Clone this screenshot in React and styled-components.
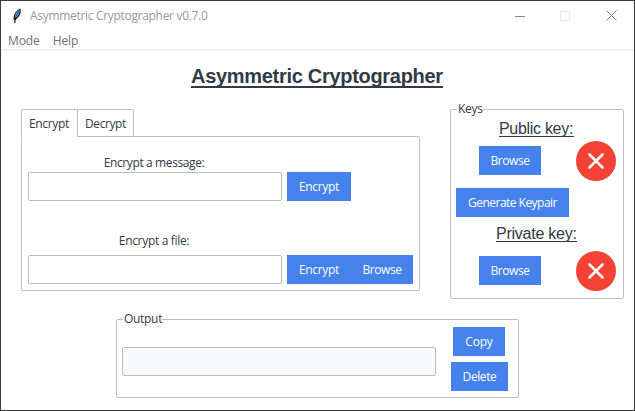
import React from "react";
import styled, { createGlobalStyle } from "styled-components";

const Global = createGlobalStyle`
  * { box-sizing: border-box; }
  body { margin: 0; background: #fff; }
  button, input { font: inherit; }
`;

const Window = styled.div`
  width: 635px;
  height: 411px;
  border: 1px solid #3b3b3d;
  background: #fff;
  color: #313a46;
  font: 12px/16px "Open Sans", "Noto Sans", sans-serif;
  overflow: hidden;
`;

const TitleBar = styled.header`
  display: flex;
  align-items: center;
  height: 29px;
  padding-left: 10px;
  color: #999;
`;

const WindowTitle = styled.span`
  flex: 1;
  margin-left: 7px;
  letter-spacing: -0.31px;
  white-space: nowrap;
`;

const WindowControls = styled.div`
  display: flex;
  align-items: center;
  gap: 35px;
  padding-right: 17px;

  svg:last-child {
    margin-left: 1px;
  }
`;

const MenuBar = styled.nav`
  display: flex;
  gap: 13px;
  height: 21px;
  padding: 3px 7px 0;
  border-bottom: 2px solid #f0f0f0;
  color: #6d6d6d;
`;

const Text = styled.span`
  letter-spacing: ${(p) => p.$track || 0}px;
  white-space: nowrap;
`;

const Content = styled.main`
  display: flex;
  flex-direction: column;
`;

const Heading = styled.h1`
  width: 252px;
  height: 23px;
  margin: 14px 0 0 190px;
  border-bottom: 2px solid #313a46;
  font: bold 20px/23px "Liberation Sans", Arial, sans-serif;
  letter-spacing: -0.3px;
  white-space: nowrap;
`;

const Columns = styled.div`
  display: flex;
  align-items: flex-start;
  gap: 30px;
  margin: 21px 0 0 20px;
`;

const Notebook = styled.section`
  width: 399px;
`;

const TabList = styled.div`
  display: flex;
  height: 28px;
`;

const Tab = styled.button`
  width: 57px;
  height: 28px;
  margin: 0 -1px 0 0;
  padding: 0 0 0 7px;
  border: 1px solid #bdbdbd;
  border-bottom-color: ${(p) => (p.$active ? "#fff" : "#bdbdbd")};
  border-radius: 2px 2px 0 0;
  background: #fff;
  color: inherit;
  text-align: left;
  line-height: 28px;
`;

const TabPane = styled.div`
  height: 155px;
  margin-top: -1px;
  padding: 18px 6px 0;
  border: 1px solid #bdbdbd;
  border-radius: 0 2px 2px 2px;
  clip-path: polygon(0 1px, 56px 1px, 56px 0, 100% 0, 100% 100%, 0 100%);
`;

const Field = styled.div`
  display: grid;
  grid-template-columns: 254px auto;
  grid-template-rows: ${(p) => p.$labelHeight}px 29px;
  column-gap: 5px;
`;

const FieldLabel = styled.label`
  grid-column: 1;
  justify-self: center;
  margin-right: 2px;
  padding-top: ${(p) => p.$top || 0}px;
  letter-spacing: ${(p) => p.$track || 0}px;
  white-space: nowrap;
`;

const Entry = styled.input`
  grid-column: 1;
  width: 100%;
  height: 29px;
  margin: 0;
  padding: 0 6px;
  border: 1px solid #bdbdbd;
  border-radius: 2px;
  outline: 0;
  background: ${(p) => (p.readOnly ? "#f8f9fb" : "#fff")};
`;

const ButtonRow = styled.div`
  display: flex;
`;

const Button = styled.button`
  width: ${(p) => p.$width}px;
  height: 29px;
  padding: 0;
  border: 0;
  background: #4582ec;
  color: #fff;
  line-height: 29px;
  letter-spacing: ${(p) => p.$track || 0}px;
  white-space: nowrap;
`;

const Group = styled.section`
  width: ${(p) => p.$width}px;
  height: ${(p) => p.$height}px;
  border: 1px solid #bdbdbd;
  border-radius: 2px;
`;

const GroupTitle = styled.h2`
  width: fit-content;
  height: 16px;
  margin: -9px 0 0 6px;
  padding: 0 0 0 1px;
  background: #fff;
  font: inherit;
  letter-spacing: ${(p) => p.$track || 0}px;
`;

const KeyTitle = styled.h3`
  width: ${(p) => p.$width}px;
  height: 18px;
  margin: ${(p) => p.$top}px 0 0 ${(p) => p.$left}px;
  border-bottom: 1px solid #313a46;
  font: 16px/20px "Liberation Sans", Arial, sans-serif;
  letter-spacing: ${(p) => p.$track || 0}px;
  white-space: nowrap;
`;

const KeyRow = styled.div`
  display: flex;
  justify-content: space-between;
  height: 40px;
  margin: ${(p) => p.$top}px 7px 0 28px;

  ${Button} {
    margin: 5px 0 0;
  }
`;

const GenerateRow = styled.div`
  display: flex;
  margin: 7px 0 0 5px;
`;

const OutputArea = styled.div`
  display: flex;
  align-items: flex-start;
  padding-left: 5px;
`;

const OutputEntry = styled.div`
  width: 314px;
  margin-top: 20px;
`;

const OutputActions = styled.div`
  display: flex;
  flex-direction: column;
  align-items: center;
  gap: 6px;
  width: 57px;
  margin-left: 15px;

  ${Button}:first-child {
    margin-right: 1px;
  }
`;

const OutputWrap = styled.div`
  margin: 20px 0 0 115px;
`;

function Feather() {
  return (
    <svg width="12" height="16" viewBox="0 0 12 16">
      <path d="M2.8 12C1.6 8.5 4.2 2.6 9.2.5c1.4 2.6.4 7.6-4.2 11z" fill="#18222e" />
      <path d="M3.7 10C3.7 7 5.6 3.4 8.5 1.8 9 4.6 7.4 8.6 4.3 10.6z" fill="#5a98dc" />
      <path d="M7.8 3.2 4.6 9.4" stroke="#1d3c60" strokeWidth=".7" />
      <path d="M4.6 9.5 3.6 15.2" stroke="#101010" strokeWidth="1.2" />
    </svg>
  );
}

function Missing() {
  return (
    <svg width="40" height="40" viewBox="0 0 40 40">
      <circle cx="20" cy="20" r="20" fill="#f44336" />
      <path d="M13.5 13.5 26.5 26.5M26.5 13.5 13.5 26.5" stroke="#fff" strokeWidth="2.6" strokeLinecap="round" />
    </svg>
  );
}

export default function App() {
  return (
    <>
      <Global />
      <Window>
        <TitleBar>
          <Feather />
          <WindowTitle>Asymmetric Cryptographer v0.7.0</WindowTitle>
          <WindowControls>
            <svg width="10" height="10"><path d="M0 5.5h10" stroke="#888" /></svg>
            <svg width="10" height="10"><path d="M.5.5h9v9h-9z" fill="none" stroke="#e8e8e8" /></svg>
            <svg width="11" height="11"><path d="M.5.5l10 10M10.5.5l-10 10" stroke="#888" /></svg>
          </WindowControls>
        </TitleBar>
        <MenuBar>
          <Text $track={-0.1}>Mode</Text>
          <Text $track={-0.1}>Help</Text>
        </MenuBar>
        <Content>
          <Heading>Asymmetric Cryptographer</Heading>
          <Columns>
            <Notebook>
              <TabList>
                <Tab $active><Text $track={-0.34}>Encrypt</Text></Tab>
                <Tab><Text $track={-0.4}>Decrypt</Text></Tab>
              </TabList>
              <TabPane>
                <Field $labelHeight={17}>
                  <FieldLabel $track={-0.38}>Encrypt a message:</FieldLabel>
                  <Entry />
                  <Button $width={64} $track={-0.3}>Encrypt</Button>
                </Field>
                <Field $labelHeight={54}>
                  <FieldLabel $top={32} $track={-0.32}>Encrypt a file:</FieldLabel>
                  <Entry />
                  <ButtonRow>
                    <Button $width={64} $track={-0.3}>Encrypt</Button>
                    <Button $width={62} $track={-0.4}>Browse</Button>
                  </ButtonRow>
                </Field>
              </TabPane>
            </Notebook>
            <Group $width={174} $height={190}>
              <GroupTitle $track={-0.3}>Keys</GroupTitle>
              <KeyTitle $width={75} $top={2} $left={48} $track={-0.3}>Public key:</KeyTitle>
              <KeyRow $top={4}>
                <Button $width={62} $track={-0.4}>Browse</Button>
                <Missing />
              </KeyRow>
              <GenerateRow>
                <Button $width={113} $track={-0.53}>Generate Keypair</Button>
              </GenerateRow>
              <KeyTitle $width={81} $top={7} $left={45} $track={-0.25}>Private key:</KeyTitle>
              <KeyRow $top={9}>
                <Button $width={62} $track={-0.4}>Browse</Button>
                <Missing />
              </KeyRow>
            </Group>
          </Columns>
          <OutputWrap>
            <Group $width={403} $height={79}>
              <GroupTitle $track={-0.3}>Output</GroupTitle>
              <OutputArea>
                <OutputEntry><Entry readOnly /></OutputEntry>
                <OutputActions>
                  <Button $width={52} $track={-0.2}>Copy</Button>
                  <Button $width={57} $track={-0.4}>Delete</Button>
                </OutputActions>
              </OutputArea>
            </Group>
          </OutputWrap>
        </Content>
      </Window>
    </>
  );
}
